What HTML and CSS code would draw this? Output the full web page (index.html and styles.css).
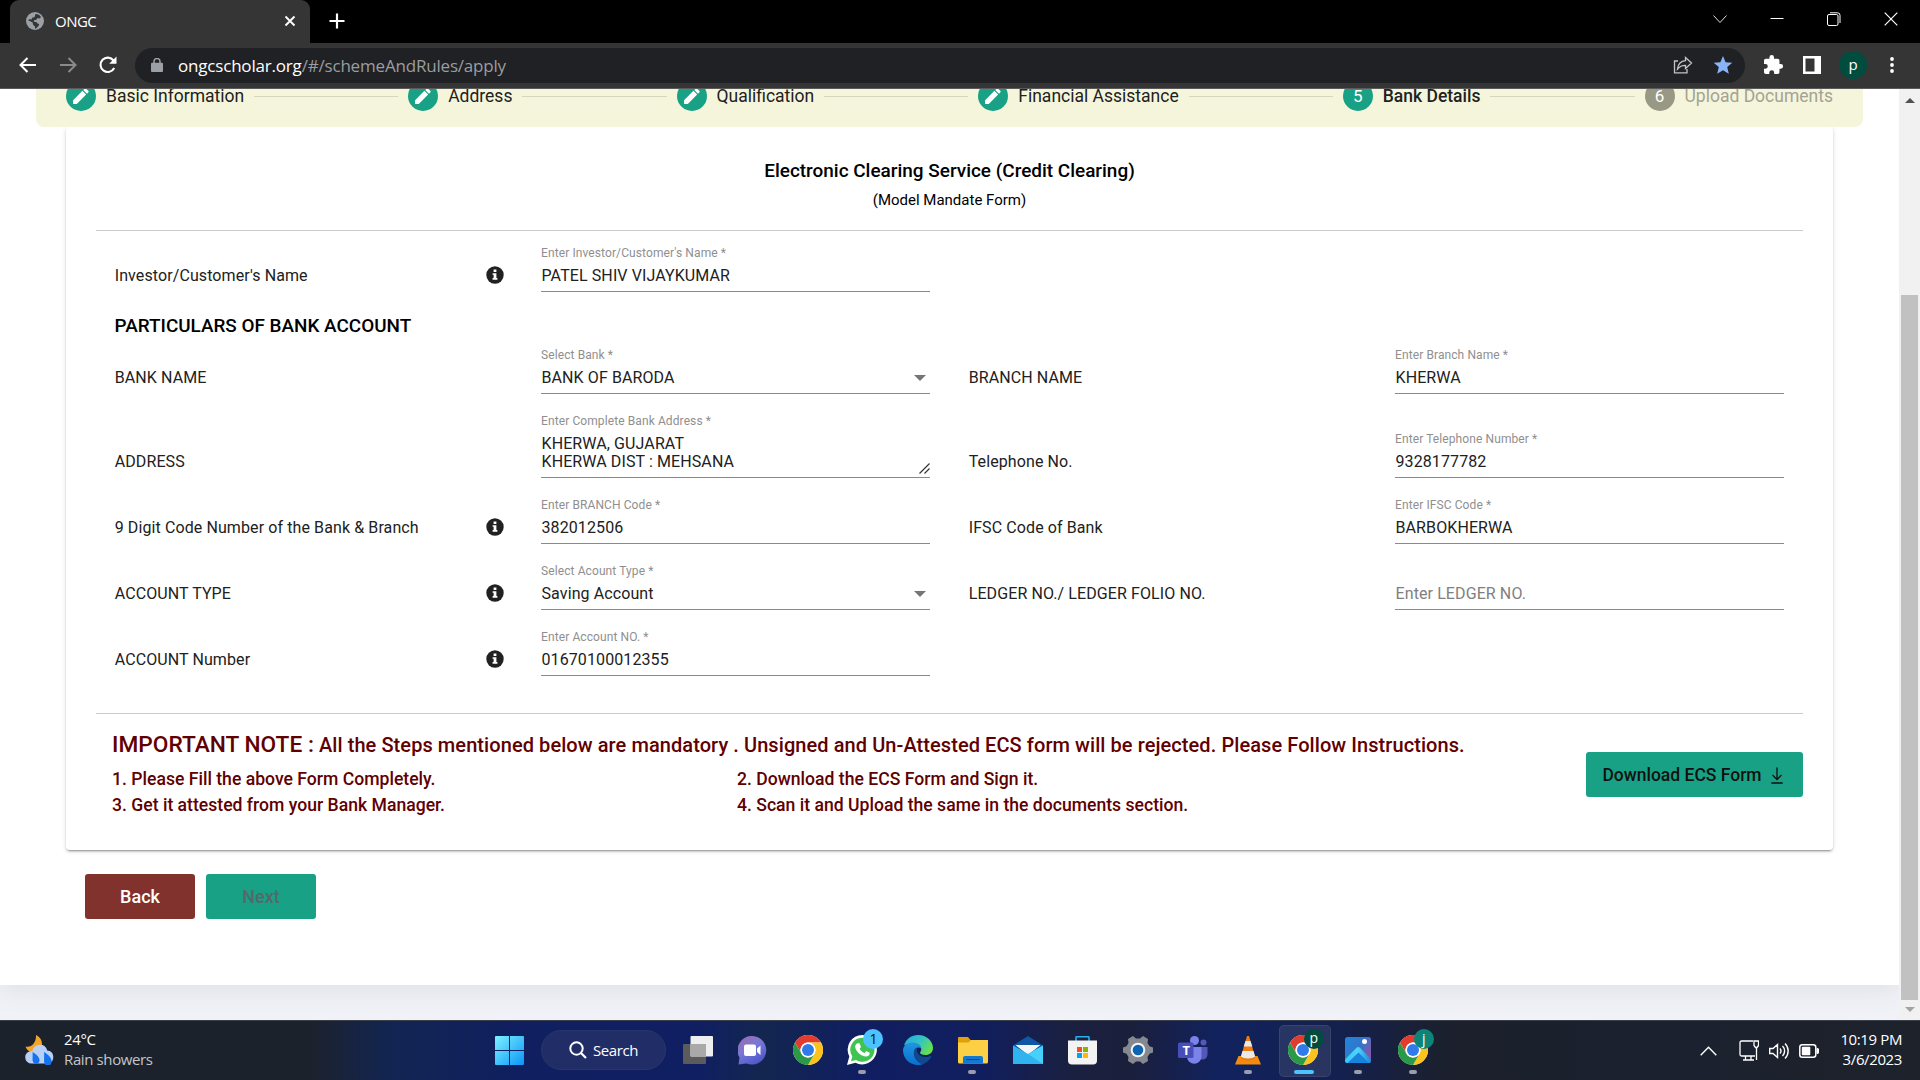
FILE: index.html
```html
<!DOCTYPE html>
<html lang="en">
<head>
<meta charset="utf-8">
<title>ONGC</title>
<link rel="stylesheet" href="styles.css">
</head>
<body>
<svg width="0" height="0" class="defs" aria-hidden="true">
  <defs>
    <symbol id="pencil" viewBox="0 0 24 24"><path fill="#fff" d="M2.500 17V21.500H7L18.200 10.300l-4.500-4.500L2.500 17zM20.900 7.400a1 1 0 0 0 0-1.400l-2.900-2.900a1 1 0 0 0-1.400 0l-1.900 1.700 4.500 4.500 1.700-1.900z"/></symbol>
    <symbol id="info" viewBox="0 0 18 18"><circle cx="9" cy="9" r="8.7" fill="#212121"/><path fill="#fff" d="M7.600 3.600h2.800v2.500H7.600zM6.600 7.200h3.800v4.900h1v1.600H6.600v-1.600h1V8.800h-1z"/></symbol>
    <symbol id="chrome" viewBox="0 0 30 30">
      <circle cx="15" cy="15" r="15" fill="#fff"/>
      <path fill="#e33b2e" d="M2 7.5A15 15 0 0 1 28 7.5H15A7.5 7.5 0 0 0 8.5 18.75Z"/>
      <path fill="#fcc31e" d="M28 7.5A15 15 0 0 1 15 30L21.5 18.75A7.5 7.5 0 0 0 15 7.5Z"/>
      <path fill="#2a9a48" d="M15 30A15 15 0 0 1 2 7.5L8.5 18.75A7.5 7.5 0 0 0 21.5 18.75Z"/>
      <circle cx="15" cy="15" r="7.5" fill="#fff"/><circle cx="15" cy="15" r="6" fill="#2f7bea"/>
    </symbol>
  </defs>
</svg>

<header class="browser">
  <div class="tabstrip">
    <div class="tab">
      <svg width="18" height="18" viewBox="0 0 18 18"><circle cx="9" cy="9" r="9" fill="#9aa0a6"/><path fill="#353535" d="M9.5 2c2.700 0 4.500 1.200 5.500 3.200l-1.500 1.300-2-.4-1.200 1.600-2.300.6-.2 1.500 2.600.3 1 1.300 1.800.5-.6 2-2.200 2-1.400 1.200v-2.600L7.200 13l-.6-2.500L2.200 8.300C3 6.800 4 7.500 5.300 7.400L6.500 5.500l2-.3z"/></svg>
      <span class="tab-title">ONGC</span>
      <svg width="12" height="12" viewBox="0 0 12 12"><path d="M1.500 1.500l9 9M10.500 1.500l-9 9" stroke="#fff" stroke-width="1.900"/></svg>
    </div>
    <svg class="newtab" width="16" height="16" viewBox="0 0 16 16"><path d="M8 .5v15M.5 8h15" stroke="#fff" stroke-width="2.200"/></svg>
    <div class="window-buttons">
      <svg width="14" height="14" viewBox="0 0 14 14"><path d="M.5 3.500L7 10.500l6.500-7" fill="none" stroke="#ddd"/></svg>
      <svg width="14" height="14" viewBox="0 0 14 14"><path d="M.5 6.500h13" stroke="#fff"/></svg>
      <svg width="14" height="14" viewBox="0 0 14 14"><rect x=".5" y="2.500" width="10.500" height="11" rx="1.500" fill="none" stroke="#fff"/><path d="M3 .8h7.500a2.500 2.500 0 0 1 2.500 2.500V11" fill="none" stroke="#fff"/></svg>
      <svg width="14" height="14" viewBox="0 0 14 14"><path d="M.7.700l12.600 12.600M13.300.700L.7 13.300" stroke="#fff" stroke-width="1.200"/></svg>
    </div>
  </div>
  <div class="toolbar">
    <div class="nav">
      <svg width="18" height="16" viewBox="0 0 18 16"><path d="M17 8H2M8.500 1L1.500 8l7 7" fill="none" stroke="#fff" stroke-width="2"/></svg>
      <svg width="18" height="16" viewBox="0 0 18 16"><path d="M1 8h15M9.500 1l7 7-7 7" fill="none" stroke="#8a8a8a" stroke-width="2"/></svg>
      <svg width="18" height="18" viewBox="0 0 18 18"><path d="M15.200 12A7.200 7.200 0 1 1 14.500 4.500L16 6" fill="none" stroke="#fff" stroke-width="2.100"/><path d="M17.500.5v7.300h-7.300z" fill="#fff"/></svg>
    </div>
    <div class="omnibox">
      <svg width="12" height="14" viewBox="0 0 12 14"><rect y="4.800" width="12" height="9.200" rx="1" fill="#9aa0a6"/><path d="M3 5.500V3.500a3 3 0 0 1 6 0v2" fill="none" stroke="#9aa0a6" stroke-width="1.500"/></svg>
      <span class="url"><b>ongcscholar.org</b>/#/schemeAndRules/apply</span>
      <svg width="20" height="18" viewBox="0 0 20 18"><path d="M5 5H1.500v11.800H14V13M12.500 1.500l6 5.500-6 5.500V9.300C8.500 9.300 6.500 10.500 4.500 13c.6-4.500 3.500-8 8-8.300z" fill="none" stroke="#c4c4c4" stroke-width="1.300"/></svg>
      <svg class="star" width="20" height="18" viewBox="0 0 20 18"><path fill="#8ab4f8" d="M10 0l2.600 6.200 6.700.5-5.100 4.400 1.600 6.600L10 14.200l-5.800 3.500 1.600-6.600L.7 6.700l6.700-.5z"/></svg>
    </div>
    <div class="actions">
      <svg width="20" height="20" viewBox="0 0 22 22"><path fill="#fff" d="M18.500 10H17V6a2 2 0 0 0-2-2h-4V2.500a2.500 2.500 0 0 0-5 0V4H2a2 2 0 0 0-2 2v3.800h1.500a2.700 2.700 0 0 1 0 5.400H0V19a2 2 0 0 0 2 2h3.800v-1.500a2.700 2.700 0 0 1 5.400 0V21H15a2 2 0 0 0 2-2v-4h1.500a2.500 2.500 0 0 0 0-5z"/></svg>
      <svg width="18" height="18" viewBox="0 0 18 18"><path fill="#fff" fill-rule="evenodd" d="M0 0h18v18H0zM2.500 2.500v13h9v-13z"/></svg>
      <span class="avatar">p</span>
      <svg width="4" height="16" viewBox="0 0 4 16"><circle cx="2" cy="2" r="1.900" fill="#fff"/><circle cx="2" cy="8" r="1.900" fill="#fff"/><circle cx="2" cy="14" r="1.900" fill="#fff"/></svg>
    </div>
  </div>
</header>

<main class="viewport">
  <div class="page">
    <div class="sheet">
      <nav class="stepper">
        <div class="step"><i class="dot"><svg width="20" height="20"><use href="#pencil"/></svg></i><span>Basic Information</span></div><hr>
        <div class="step"><i class="dot"><svg width="20" height="20"><use href="#pencil"/></svg></i><span>Address</span></div><hr>
        <div class="step"><i class="dot"><svg width="20" height="20"><use href="#pencil"/></svg></i><span>Qualification</span></div><hr>
        <div class="step"><i class="dot"><svg width="20" height="20"><use href="#pencil"/></svg></i><span>Financial Assistance</span></div><hr>
        <div class="step active"><i class="dot">5</i><span>Bank Details</span></div><hr>
        <div class="step pending"><i class="dot">6</i><span>Upload Documents</span></div>
      </nav>
      <section class="card">
        <h1 class="title">Electronic Clearing Service (Credit Clearing)</h1>
        <p class="subtitle">(Model Mandate Form)</p>
        <div class="form">
          <div class="label">Investor/Customer's Name<svg width="18" height="18"><use href="#info"/></svg></div>
          <div class="field"><small>Enter Investor/Customer's Name *</small><span>PATEL SHIV VIJAYKUMAR</span></div>
          <h2 class="section">PARTICULARS OF BANK ACCOUNT</h2>
          <div class="label">BANK NAME</div>
          <div class="field"><small>Select Bank *</small><span>BANK OF BARODA<i class="caret"></i></span></div>
          <div class="label">BRANCH NAME</div>
          <div class="field"><small>Enter Branch Name *</small><span>KHERWA</span></div>
          <div class="label">ADDRESS</div>
          <div class="field"><small>Enter Complete Bank Address *</small><span>KHERWA, GUJARAT</span><span>KHERWA DIST : MEHSANA<svg class="grip" width="11" height="11" viewBox="0 0 11 11"><path d="M.5 10.500l10-10M5.500 10.500l5-5" stroke="#333" stroke-width="1.200"/></svg></span></div>
          <div class="label">Telephone No.</div>
          <div class="field"><small>Enter Telephone Number *</small><span>9328177782</span></div>
          <div class="label">9 Digit Code Number of the Bank &amp; Branch<svg width="18" height="18"><use href="#info"/></svg></div>
          <div class="field"><small>Enter BRANCH Code *</small><span>382012506</span></div>
          <div class="label">IFSC Code of Bank</div>
          <div class="field"><small>Enter IFSC Code *</small><span>BARBOKHERWA</span></div>
          <div class="label">ACCOUNT TYPE<svg width="18" height="18"><use href="#info"/></svg></div>
          <div class="field"><small>Select Acount Type *</small><span>Saving Account<i class="caret"></i></span></div>
          <div class="label">LEDGER NO./ LEDGER FOLIO NO.</div>
          <div class="field empty"><span>Enter LEDGER NO.</span></div>
          <div class="label">ACCOUNT Number<svg width="18" height="18"><use href="#info"/></svg></div>
          <div class="field"><small>Enter Account NO. *</small><span>01670100012355</span></div>
        </div>
        <div class="note">
          <div class="note-text">
            <p class="lead"><b>IMPORTANT NOTE :</b> All the Steps mentioned below are mandatory . Unsigned and Un-Attested ECS form will be rejected. Please Follow Instructions.</p>
            <div class="steps">
              <span>1. Please Fill the above Form Completely.</span><span>2. Download the ECS Form and Sign it.</span>
              <span>3. Get it attested from your Bank Manager.</span><span>4. Scan it and Upload the same in the documents section.</span>
            </div>
          </div>
          <button class="btn download">Download ECS Form<svg width="12" height="17" viewBox="0 0 12 17"><path d="M6 .5v12M1.500 8L6 12.500 10.500 8M.3 16h11.400" fill="none" stroke="#111" stroke-width="1.300"/></svg></button>
        </div>
      </section>
      <div class="buttons">
        <button class="btn back">Back</button>
        <button class="btn next">Next</button>
      </div>
    </div>
  </div>
  <div class="scrollbar"><i class="up"></i><i class="thumb"></i><i class="down"></i></div>
</main>

<footer class="taskbar">
  <div class="weather">
    <svg width="30" height="30" viewBox="0 0 30 30">
      <path fill="#f3a52a" d="M11 0c5 2.500 7 7 5.500 12L8 17C4 17 1.500 15 .5 11.500 6 13 11.500 8 11 0z"/>
      <path fill="#b9d0f6" d="M6.500 28.500a6.300 6.300 0 0 1 0-12.600h1a7.500 7.500 0 0 1 14.700-.4 6.600 6.600 0 0 1 1 13z"/>
      <path fill="#1673f0" d="M7.500 17c5 3 7.500 6 7 9a3.500 3.500 0 0 1-6.500 1c-1-2 0-5-.5-10zM19 17c5 3 8 6.500 7.500 10a3.600 3.600 0 0 1-7 1.200c-1-2.500 0-6-.5-11.200z"/>
    </svg>
    <div class="lines"><div>24°C</div><div class="dim">Rain showers</div></div>
  </div>
  <div class="apps">
    <span class="app"><svg width="29" height="29" viewBox="0 0 29 29"><defs><linearGradient id="w" x2="1" y2="1"><stop stop-color="#7df0ff"/><stop offset="1" stop-color="#0a96f8"/></linearGradient></defs><path fill="url(#w)" d="M0 1a1 1 0 0 1 1-1h13v14H0zM15 0h13a1 1 0 0 1 1 1v13H15zM0 15h14v14H1a1 1 0 0 1-1-1zM15 15h14v13a1 1 0 0 1-1 1H15z"/></svg></span>
    <span class="search"><svg width="18" height="18" viewBox="0 0 18 18"><circle cx="7.500" cy="7.500" r="6.200" fill="none" stroke="#fff" stroke-width="2"/><path d="M12 12l5 5" stroke="#fff" stroke-width="2.200"/></svg>Search</span>
    <span class="app"><svg width="30" height="28" viewBox="0 0 30 28"><rect y="8" width="23" height="20" rx="1" fill="#5b5b5b"/><rect x="7.500" width="22.500" height="20.500" rx="1" fill="#eee"/><rect x="7.500" y="8" width="15.500" height="12.500" fill="#a9a9a9"/></svg></span>
    <span class="app"><svg width="29" height="29" viewBox="0 0 29 29"><defs><linearGradient id="ch" x2=".6" y2="1"><stop stop-color="#a06aa8"/><stop offset=".5" stop-color="#7878d8"/><stop offset="1" stop-color="#5058c8"/></linearGradient></defs><path fill="url(#ch)" d="M14.500 0a14.300 14.300 0 1 1-6 27.500L.5 28.500l1-7A14.300 14.300 0 0 1 14.500 0z"/><rect x="6" y="8.500" width="12" height="11.500" rx="2" fill="#fff"/><path fill="#fff" d="M19 12.500l3.500-3v9.500L19 16z"/></svg></span>
    <span class="app"><svg width="30" height="30"><use href="#chrome"/></svg></span>
    <span class="app open"><svg width="31" height="30" viewBox="0 0 31 30"><path fill="#fff" d="M15.500 0a14.700 14.700 0 1 1-7 27.800L0 30l2.300-8.500A14.700 14.700 0 0 1 15.500 0z"/><path fill="#3fc351" d="M15.500 2.800A12 12 0 1 1 9 24.900L4 26.200l1.300-4.800A12 12 0 0 1 15.500 2.800z"/><path fill="#fff" d="M10.500 8.200l2 .1 1.500 3.700-1.300 1.800c1 2 2.500 3.300 4.800 4.300l1.700-2 3.500 1.700c.3 2-1.500 3.800-3.700 3.800-5.500-.5-10.200-5-10.800-9.500-.1-1.800 1-3.300 2.300-3.900z"/></svg><i class="badge count">1</i></span>
    <span class="app"><svg width="30" height="30" viewBox="0 0 30 30"><defs><linearGradient id="e1" x2="1" y2=".5"><stop stop-color="#24a8e8"/><stop offset=".6" stop-color="#35c4c0"/><stop offset="1" stop-color="#62e050"/></linearGradient><linearGradient id="e2" x2="0" y2="1"><stop stop-color="#2196e0"/><stop offset="1" stop-color="#0a6fd0"/></linearGradient></defs><path fill="url(#e1)" d="M1 10.500C3 4 8.500 0 15 0c9 0 15 6.500 15 13 0 4.500-3.500 7-7.500 7-3.500 0-5.500-1.200-5.500-2.200 0-.8 1.300-1.500 1.300-3.800 0-3-3.500-5.500-8-5.500-4 0-7.300 1-9.300 2z"/><path fill="url(#e2)" d="M0 15C.5 10 5 7.500 9.500 7.500c5 0 8.500 2.500 8.800 6-2-2-6.300-1.500-7.300 3-1 5 3 11 9 12.700-1.500.5-3 .8-5 .8C6.500 30 0 23.500 0 15z"/><path fill="#114a8c" d="M11 16.500c.3-2 1.500-3.500 3.200-4-1.700 4.500 2 9.500 8.300 9.500 2 0 3.500-.5 5-1.300 1 0 .8 1 .3 1.800-2 3.300-4.800 5.500-7.800 6.700-5.500-1-9.800-7-9-12.700z"/></svg></span>
    <span class="app open"><svg width="30" height="27" viewBox="0 0 30 27"><path fill="#e0a008" d="M0 1a1 1 0 0 1 1-1h9l2.500 3H29v8H0z"/><path fill="#fccf45" d="M0 5.500h10.500L13 3h17v22a1.500 1.500 0 0 1-1.500 1.500h-27A1.500 1.500 0 0 1 0 25z"/><path fill="#1478d0" d="M5 26.500V21a2 2 0 0 1 2-2h16a2 2 0 0 1 2 2v5.500z"/><path d="M8.500 22.500h13" stroke="#0a4c94"/></svg></span>
    <span class="app"><svg width="30" height="28" viewBox="0 0 30 28"><path fill="#0f56a4" d="M15 0l15 9.500v6H0v-6z"/><path fill="#f4f4f4" d="M2.500 9h25L15 19z"/><path fill="#2fb4f0" d="M0 9.500L15 18l15-8.500V28H0z"/><path fill="#46d0fa" d="M30 9.500V28L15 18z"/></svg></span>
    <span class="app"><svg width="29" height="29" viewBox="0 0 29 29"><path d="M8 6V1.500a.8.800 0 0 1 .8-.8h11.400a.8.800 0 0 1 .8.800V6" fill="none" stroke="#26b0ee" stroke-width="1.600"/><path fill="#f3f3f3" d="M0 4.500h29v20a4 4 0 0 1-4 4H4a4 4 0 0 1-4-4z"/><path fill="#f25022" d="M9 11h5v5H9z"/><path fill="#7fba00" d="M15 11h5v5h-5z"/><path fill="#00a4ef" d="M9 17h5v5H9z"/><path fill="#ffb900" d="M15 17h5v5h-5z"/></svg></span>
    <span class="app"><svg width="30" height="28" viewBox="0 0 30 28"><path fill="#85898f" d="M10 0l3 2.500h4L20 0l5 3-.5 4 2 3.200 3.500 1.300v5l-3.500 1.300-2 3.200.5 4-5 3-3-2.500h-4L10 28l-5-3 .5-4-2-3.200L0 16.500v-5l3.500-1.300 2-3.200L5 3z"/><circle cx="15" cy="14" r="7.300" fill="#f4f4f4"/><circle cx="15" cy="14" r="5.300" fill="#0d63b4"/></svg></span>
    <span class="app"><svg width="30" height="28" viewBox="0 0 30 28"><circle cx="25.500" cy="6.500" r="3" fill="#5558b8"/><path fill="#5358b8" d="M21 11h8.500v8a5 5 0 0 1-8.500 3z"/><circle cx="16.500" cy="4.500" r="4.500" fill="#7b83eb"/><path fill="#7b83eb" d="M9 11h14.500v9a7 7 0 0 1-14.500 1z"/><rect y="6.500" width="15.500" height="15.500" rx="1.500" fill="#464eb8"/></svg><b class="teams-t">T</b></span>
    <span class="app open"><svg width="26" height="29" viewBox="0 0 26 29"><path fill="#f48b0c" d="M3.500 20h19L26 28.500H0z"/><path fill="#f07c10" d="M12 0h2l6.500 22c-2.500 3.500-12.500 3.500-15 0z"/><path fill="#e9e9e9" d="M10.500 5h5l1.800 5.500h-8.600zM7.500 15h11l1.600 5.500c-3 2.500-11.200 2.500-14.200 0z"/></svg></span>
    <span class="app open current"><svg width="30" height="30"><use href="#chrome"/></svg><i class="badge p">p</i></span>
    <span class="app open"><svg width="26" height="26" viewBox="0 0 26 26"><defs><linearGradient id="ph" x2="1" y2=".6"><stop stop-color="#1d86dc"/><stop offset=".6" stop-color="#3575c8"/><stop offset="1" stop-color="#8a55a8"/></linearGradient><linearGradient id="pm" x2="1" y2="0"><stop stop-color="#35c8f8"/><stop offset=".5" stop-color="#4fd4fa"/><stop offset="1" stop-color="#1a86dc"/></linearGradient><clipPath id="pc"><rect width="26" height="26" rx="2.500"/></clipPath></defs><g clip-path="url(#pc)"><path fill="url(#ph)" d="M0 0h26v26H0z"/><path fill="url(#pm)" d="M0 22.500L11.500 10.800a2.500 2.500 0 0 1 3.500 0L26 22v4H0z"/><path fill="#1783dc" d="M2.500 26L13.500 15.500 24 26z"/></g><circle cx="19.500" cy="4.500" r="2.500" fill="#fff"/></svg></span>
    <span class="app open"><svg width="30" height="30"><use href="#chrome"/></svg><i class="badge j">j</i></span>
  </div>
  <div class="tray">
    <svg width="17" height="10" viewBox="0 0 17 10"><path d="M.7 9.200L8.500 1.300l7.800 7.900" fill="none" stroke="#fff" stroke-width="1.400"/></svg>
    <svg class="monitor" width="20" height="21" viewBox="0 0 20 21"><path d="M14 1H2.500a1.500 1.500 0 0 0-1.500 1.500v12A1.500 1.500 0 0 0 2.500 16H16M6.500 16v3.500M12 16v3.500M4 20h11M15 1h4.500v4.500l-1.500 2h-1.500L15 5.500zM17.500 8v12" fill="none" stroke="#fff" stroke-width="1.300"/></svg>
    <svg width="20" height="18" viewBox="0 0 20 18"><path d="M.7 6.500v5h3.300l4.500 4V2.500L4 6.500zM11 6.500a4 4 0 0 1 0 5M13.500 4a7 7 0 0 1 0 10M16 1.500a10.500 10.500 0 0 1 0 15" fill="none" stroke="#fff" stroke-width="1.400"/></svg>
    <svg width="20" height="14" viewBox="0 0 20 14"><rect x=".8" y=".8" width="16" height="12.400" rx="2.500" fill="none" stroke="#fff" stroke-width="1.500"/><rect x="2.800" y="2.800" width="8.500" height="8.400" rx="1" fill="#fff"/><path d="M18 4.500a2 2 0 0 1 0 5z" fill="#fff" stroke="#fff"/></svg>
    <div class="clock lines"><div>10:19 PM</div><div>3/6/2023</div></div>
  </div>
</footer>
</body>
</html>
```
FILE: styles.css
```css
* { box-sizing: border-box; margin: 0; padding: 0; }
html, body { width: 1920px; height: 1080px; overflow: hidden; }
body { display: flex; flex-direction: column; font-family: Roboto, sans-serif; background: #fff; }
i { font-style: normal; }
svg { display: block; flex: none; }
.defs { position: absolute; }

/* browser chrome */
.browser, .taskbar { font-family: "Open Sans", "Noto Sans", sans-serif; }
.browser { height: 89px; background: #353535; border-bottom: 1px solid #5a5a5a; flex: none; }
.tabstrip { height: 43px; background: #000; display: flex; align-items: center; }
.tab { width: 300px; height: 43px; margin-left: 10px; padding: 0 14px 1px 16px; background: #353535; border-radius: 9px 9px 0 0; display: flex; align-items: center; color: #fff; font-size: 15px; }
.tab-title { margin-left: 11px; flex: 1; letter-spacing: -.5px; padding-bottom: 1px; }
.newtab { margin-left: 19px; margin-bottom: 1px; }
.window-buttons { margin-left: auto; margin-right: 22px; margin-bottom: 6px; display: flex; gap: 43px; }
.toolbar { height: 45px; display: flex; align-items: center; padding-bottom: 1px; }
.nav { display: flex; align-items: center; gap: 22px; padding-left: 19px; width: 135px; flex: none; }
.omnibox { width: 1610px; height: 35px; border-radius: 18px; background: #202124; display: flex; align-items: center; padding: 0 12px 0 16px; flex: none; }
.url { flex: 1; margin-left: 15px; font-size: 17px; color: #9a9da1; letter-spacing: -.19px; }
.url b { font-weight: 400; color: #fff; }
.star { margin-left: 20px; }
.actions { display: flex; align-items: center; padding-left: 19px; gap: 19px; }
.actions .avatar { width: 28px; height: 28px; border-radius: 50%; background: #004d40; color: #fff; display: grid; place-items: center; font-size: 15px; margin: 0 4px 0 -1px; padding-bottom: 3px; }

/* page */
.viewport { flex: none; height: 931px; display: flex; overflow: hidden; }
.page { width: 1899px; background: #f1f2f7; overflow: hidden; }
.sheet { height: 920px; margin-top: -24px; background: #fff; box-shadow: 0 4px 26px rgba(60, 60, 80, .1); padding: 0 36px; }
.stepper { position: relative; width: 1827px; height: 62px; padding: 0 30px; background: #f5f5dc; border-radius: 8px; display: flex; align-items: center; gap: 10px; z-index: 1; }
.stepper hr { flex: 1; border: 0; height: 1px; background: #d5d5c0; }
.step { display: flex; align-items: center; gap: 10px; font-size: 17.500px; line-height: 22px; color: #212121; }
.dot { width: 30px; height: 30px; border-radius: 50%; background: #18a185; color: #fff; display: grid; place-items: center; font-size: 17px; padding-bottom: 1px; }
.step.active { font-weight: 500; }
.step.active .dot { font-weight: 400; }
.step.pending { color: #a3a393; }
.step.pending .dot { background: #989885; }
.card { width: 1767px; height: 723px; margin-left: 30px; padding: 0 30px; border-radius: 4px; background: #fff; box-shadow: 0 3px 1px -2px rgba(0,0,0,.2), 0 2px 2px 0 rgba(0,0,0,.14), 0 1px 5px 0 rgba(0,0,0,.12); overflow: hidden; }
.title { margin-top: 32px; text-align: center; font-size: 18.950px; line-height: 24px; font-weight: 500; color: #000; }
.subtitle { margin-top: 7px; text-align: center; font-size: 15px; line-height: 20px; color: #000; height: 40px; }
.form { border-top: 1px solid #ccc; padding: 0 20px 0 18px; display: grid; grid-template-columns: repeat(4, 389px); column-gap: 38px; grid-template-rows: 61px 52px 50px 84px 66px 66px 66px; align-items: end; font-size: 16px; line-height: 18px; color: #212121; letter-spacing: .1px; }
.section { grid-column: 1 / -1; font-size: 18.900px; line-height: 22px; font-weight: 500; color: #000; padding: 0 0 7px .6px; letter-spacing: 0; }
.label { display: flex; justify-content: space-between; padding-bottom: 7px; padding-left: .7px; margin-right: -1px; }
.label svg { margin-top: -1px; margin-bottom: 1px; }
.field { border-bottom: 1px solid #8a8a8a; padding-bottom: 6px; display: flex; flex-direction: column; }
.field small { font-size: 12px; line-height: 16px; margin-bottom: 6px; color: #8f8f8f; }
.field span { display: flex; justify-content: space-between; align-items: center; padding-left: .5px; }
.field.empty { color: #808080; }
.caret { border: 6px solid transparent; border-top-color: #757575; border-bottom: 0; margin-right: 4px; }
.grip { margin-bottom: -12px; }
.note { border-top: 1px solid #ccc; margin-top: 37px; display: flex; color: #600000; }
.note-text { padding: 17px 0 0 16px; flex: 1; font-weight: 500; }
.lead { font-size: 20px; line-height: 28px; white-space: nowrap; letter-spacing: .075px; }
.lead b { font-size: 22.700px; font-weight: 500; letter-spacing: 0; }
.steps { margin-top: 7px; display: grid; grid-template-columns: 625px 1fr; font-size: 17.600px; line-height: 26px; }
.btn { border: 0; border-radius: 3px; height: 45px; font: 500 18px Roboto, sans-serif; display: flex; align-items: center; justify-content: center; }
.download { width: 217px; margin-top: 38px; padding-right: 4px; background: #18a185; color: #111; gap: 9px; flex: none; font-size: 17.500px; }
.download svg { margin-top: 2px; }
.buttons { display: flex; gap: 11px; padding: 24px 0 0 49px; }
.buttons .btn { width: 110px; }
.back { background: #82322c; color: #fff; }
.next { background: #18a185; color: #53696a; }
.scrollbar { width: 21px; background: #f1f1f1; display: flex; flex-direction: column; align-items: center; padding-top: 9px; }
.up, .down { border: 5px solid transparent; }
.up { border-bottom-color: #505050; border-top: 0; }
.down { border-top: 5px solid #a3a3a3; border-bottom: 0; margin-top: 7px; }
.thumb { width: 17px; height: 705px; margin-top: 192px; background: #c1c1c1; }

/* taskbar */
.taskbar { flex: none; height: 60px; border-top: 1px solid #3a3f49; display: grid; grid-template-columns: 480px 1fr auto; align-items: center; color: #fff; font-size: 15px; line-height: 20px; letter-spacing: -.38px;
  background: linear-gradient(90deg, #1c222c 0, #1c222c 310px, #122552 390px, #0f1f60 520px, #101f62 700px, #13264f 760px, #101e62 860px, #111e5e 980px, #1a2040 1070px, #1a1f3c 1130px, #11225e 1220px, #14204e 1340px, #1c202c 1450px, #1b212f 1640px, #1d222b 1920px); }
.weather { display: flex; align-items: center; gap: 9px; padding-left: 25px; }
.lines { padding-bottom: 4px; }
.weather svg { margin-bottom: 2px; }
.dim { color: #c3c6cb; }
.apps { display: flex; align-items: center; height: 59px; padding-left: 2px; padding-bottom: 1px; }
.app { position: relative; width: 55.050px; height: 50px; display: grid; place-items: center; flex: none; isolation: isolate; }
.search { width: 125px; height: 40px; margin: 0 4px 0 4px; padding-bottom: 1px; border-radius: 20px; background: #212d67; border: 1px solid #29356c; display: flex; align-items: center; justify-content: center; gap: 6px; flex: none; }
.open::after { content: ""; position: absolute; left: 23px; bottom: 1px; width: 8px; height: 4px; border-radius: 2px; background: #9a9dab; }
.current::before { content: ""; position: absolute; z-index: -1; left: 3px; top: 0; width: 50px; height: 50px; border-radius: 5px; background: rgba(255,255,255,.09); border: 1px solid rgba(255,255,255,.08); }
.current::after { left: 18px; width: 20px; background: #4cc2ff; }
.badge { position: absolute; left: 28px; top: 4px; width: 20px; height: 20px; border-radius: 50%; display: grid; place-items: center; font-size: 14px; line-height: 16px; }
.count { background: #4cc2ff; color: #111; }
.p { background: #004d40; padding-bottom: 3px; }
.j { background: #0a8577; }
.teams-t { position: absolute; left: 17px; top: 15px; font-size: 13px; }
.tray { display: flex; align-items: center; gap: 10px; padding-right: 18px; }
.monitor { margin-left: 12px; }
.clock { text-align: right; width: 73px; white-space: nowrap; }
```
